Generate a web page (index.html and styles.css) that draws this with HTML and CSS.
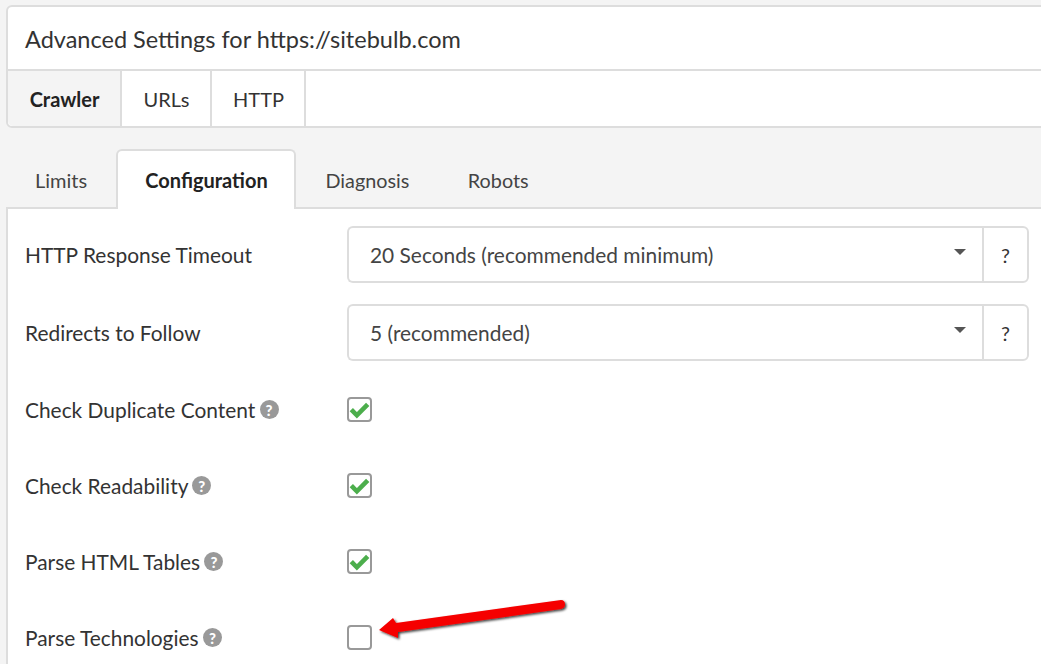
FILE: index.html
```html
<!DOCTYPE html>
<html lang="en">
<head>
<meta charset="utf-8">
<title>Advanced Settings</title>
<link rel="stylesheet" href="styles.css">
</head>
<body>
<div class="page">
  <section class="head-panel">
    <h1 class="title">Advanced Settings for https://sitebulb.com</h1>
    <nav class="main-tabs">
      <div class="main-tab active">Crawler</div>
      <div class="main-tab">URLs</div>
      <div class="main-tab">HTTP</div>
    </nav>
  </section>
  <nav class="sub-tabs">
    <div class="sub-tab first">Limits</div>
    <div class="sub-tab active">Configuration</div>
    <div class="sub-tab">Diagnosis</div>
    <div class="sub-tab">Robots</div>
  </nav>
  <section class="content">
    <div class="row select-row">
      <div class="label">HTTP Response Timeout</div>
      <div class="select-group">
        <div class="select"><span>20 Seconds (recommended minimum)</span><i class="caret"></i></div>
        <div class="help-btn">?</div>
      </div>
    </div>
    <div class="row select-row">
      <div class="label">Redirects to Follow</div>
      <div class="select-group">
        <div class="select"><span>5 (recommended)</span><i class="caret"></i></div>
        <div class="help-btn">?</div>
      </div>
    </div>
    <div class="row check-row">
      <div class="label">Check Duplicate Content <span class="q">?</span></div>
      <div class="check"><svg viewBox="0 0 20 20" width="21" height="21"><path d="M2.2 10.2 L7.5 15.5 L17.8 5.2" fill="none" stroke="#4cae4c" stroke-width="4.4"/></svg></div>
    </div>
    <div class="row check-row">
      <div class="label">Check Readability <span class="q">?</span></div>
      <div class="check"><svg viewBox="0 0 20 20" width="21" height="21"><path d="M2.2 10.2 L7.5 15.5 L17.8 5.2" fill="none" stroke="#4cae4c" stroke-width="4.4"/></svg></div>
    </div>
    <div class="row check-row">
      <div class="label">Parse HTML Tables <span class="q">?</span></div>
      <div class="check"><svg viewBox="0 0 20 20" width="21" height="21"><path d="M2.2 10.2 L7.5 15.5 L17.8 5.2" fill="none" stroke="#4cae4c" stroke-width="4.4"/></svg></div>
    </div>
    <div class="row check-row">
      <div class="label">Parse Technologies <span class="q">?</span></div>
      <div class="check"></div>
    </div>
  </section>
  <svg class="arrow" width="200" height="60" viewBox="0 0 200 60">
    <defs>
      <filter id="shadow" x="-10%" y="-30%" width="120%" height="170%">
        <feDropShadow dx="1.5" dy="1.5" stdDeviation="1.3" flood-color="#000" flood-opacity="0.75"/>
      </filter>
    </defs>
    <path d="M4 35 L18 23 L21 28 L186 5 Q190 5 190 9.500 Q190 13 186 14 L23 37 L23 43 Z" fill="#f50000" filter="url(#shadow)"/>
  </svg>
</div>
</body>
</html>
```
FILE: styles.css
```css
* { box-sizing: border-box; }
html, body { margin: 0; height: 100%; overflow: hidden; }
body { background: #f4f4f4; font-family: Lato, sans-serif; color: #333; }
.page { position: relative; width: 1041px; height: 664px; overflow: hidden; padding: 5px 0 0 6px; }
.head-panel { width: 1060px; height: 123px; background: #fff; border: 2px solid #ddd; border-radius: 6px; display: flex; flex-direction: column; }
.title { margin: 0; height: 64px; font-size: 23.5px; font-weight: 400; line-height: 64px; padding-left: 17px; border-bottom: 2px solid #ddd; color: #333; }
.main-tabs { display: flex; height: 55px; }
.main-tab { display: flex; align-items: center; justify-content: center; font-size: 20px; padding-left: 1px; border-right: 2px solid #ddd; color: #333; width: 90px; }
.main-tab:last-child { width: 94px; }
.main-tab.active { width: 114px; background: #f4f4f4; font-weight: 700; color: #222; border-bottom-left-radius: 5px; }
.sub-tabs { display: flex; height: 59px; margin-top: 21px; position: relative; z-index: 1; }
.sub-tab { display: flex; align-items: center; justify-content: center; font-size: 19.8px; padding: 0 27px 0 27.5px; color: #444; border: 2px solid transparent; border-bottom: 0; }
.sub-tab.first { padding: 0 28px; width: 110px; font-size: 20px; }
.sub-tab.active { width: 180px; padding: 0 0 0 1px; background: #fff; border-color: #ddd; border-radius: 6px 6px 0 0; font-size: 20px; font-weight: 700; color: #222; height: 60px; }
.content { width: 1060px; height: 470px; margin-top: -1px; background: #fff; border-top: 2px solid #ddd; border-left: 2px solid #ddd; padding: 17px 0 0 17px; }
.row { display: flex; align-items: center; }
.label { width: 322px; font-size: 20.9px; color: #333; }
.select-row { height: 57px; margin-bottom: 21px; }
.select-group { display: flex; width: 682px; height: 57px; }
.select { flex: 1; display: flex; align-items: center; justify-content: space-between; border: 2px solid #ddd; border-right: 0; border-radius: 6px 0 0 6px; padding: 0 16px 0 21px; font-size: 20.9px; color: #444; }
.caret { width: 0; height: 0; border-left: 6px solid transparent; border-right: 6px solid transparent; border-top: 6px solid #555; margin-top: -6px; }
.help-btn { width: 47px; display: flex; align-items: center; justify-content: center; border: 2px solid #ddd; border-radius: 0 6px 6px 0; font-size: 20px; }
.check-row { height: 24px; margin-bottom: 52px; }
.select-row + .select-row + .check-row { margin-top: 36px; }
.check { width: 25px; height: 25px; border: 2px solid #999; border-radius: 4px; display: flex; align-items: center; justify-content: center; background: #fff; }
.q { display: inline-flex; width: 19px; height: 19px; border-radius: 50%; background: #999; color: #fff; font-size: 15px; font-weight: 900; align-items: center; justify-content: center; vertical-align: 2px; margin-left: -1px; }
.arrow { position: absolute; left: 375px; top: 595px; }
```
